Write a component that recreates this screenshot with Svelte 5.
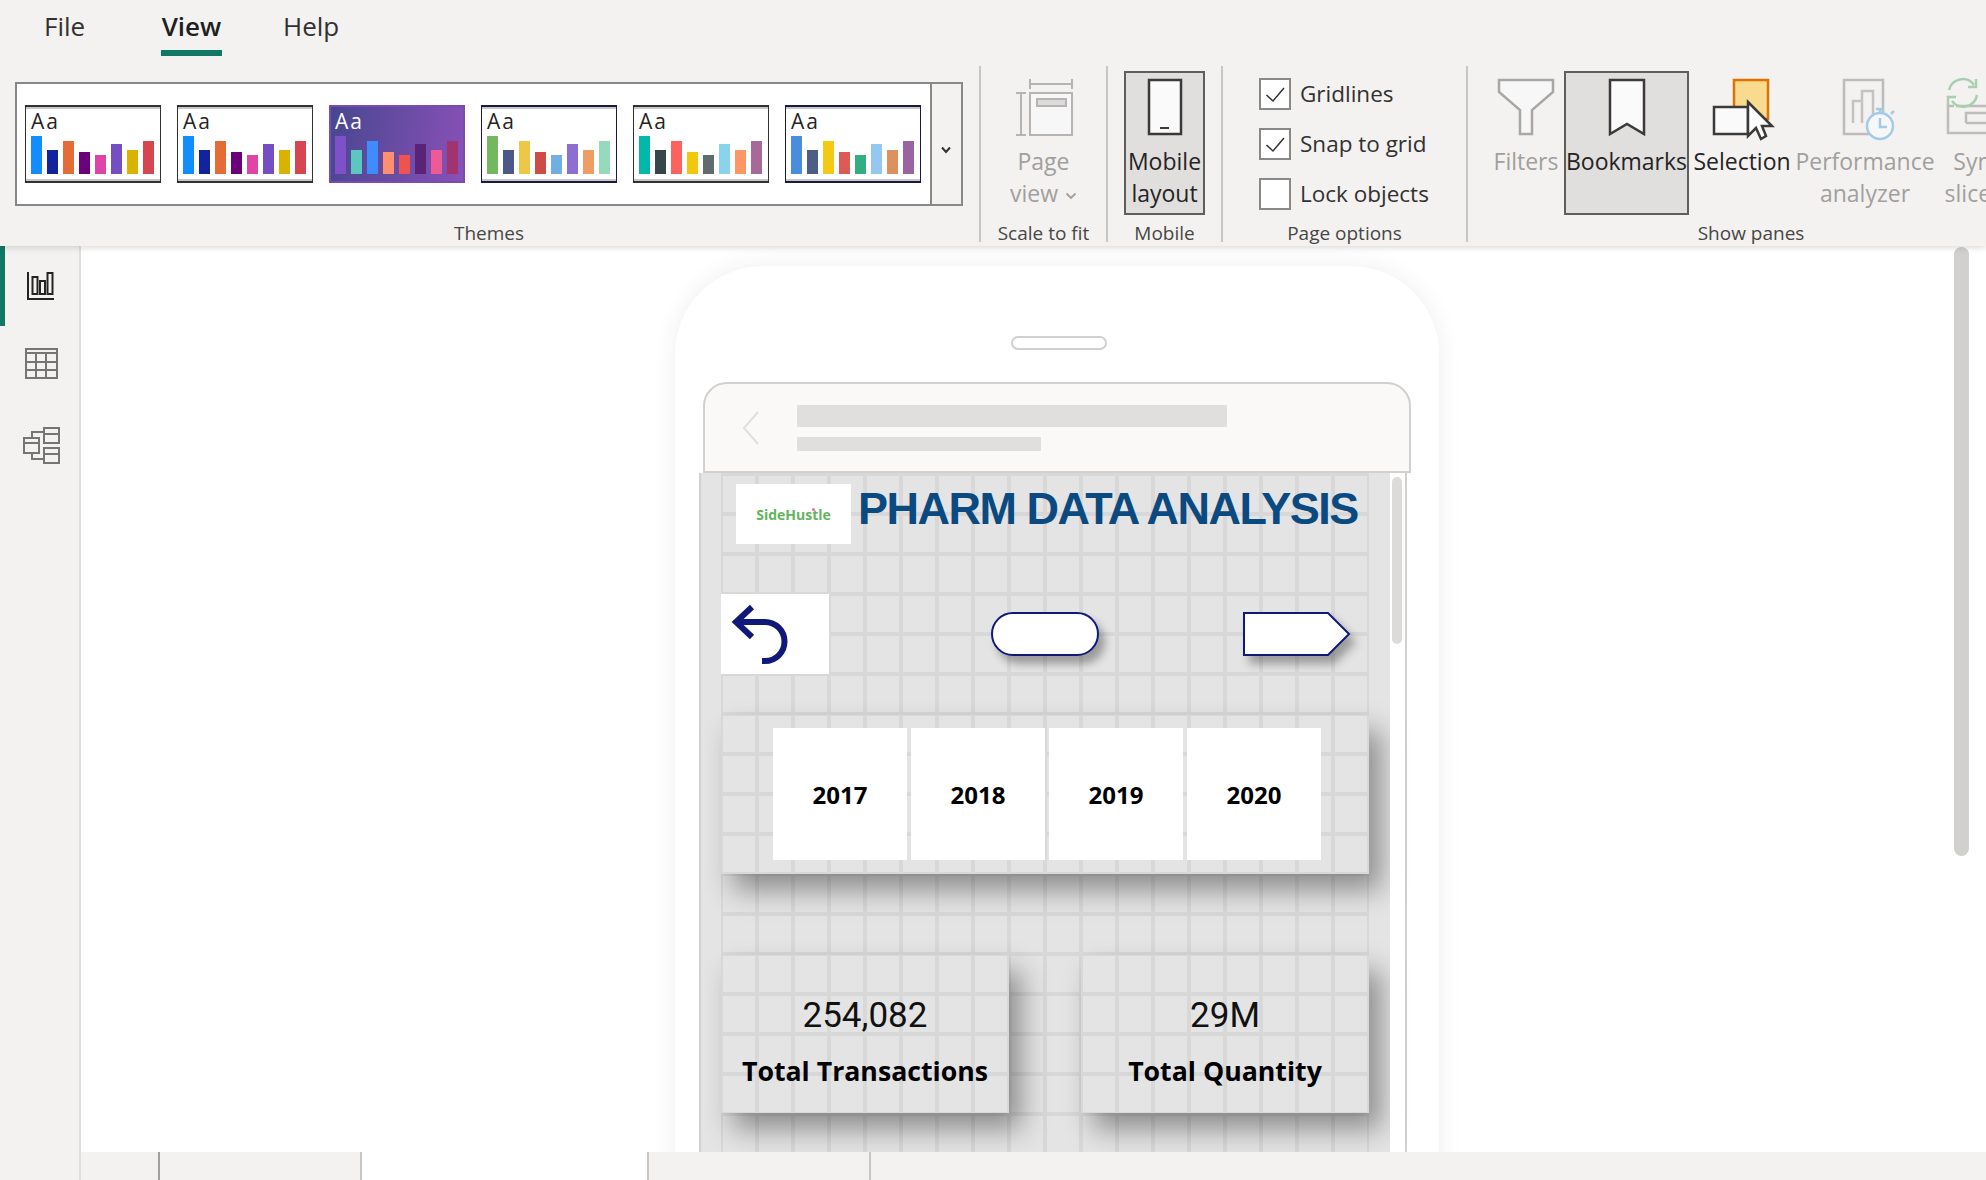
<script>
  const barHeights = [38, 24, 33, 22, 19, 30, 24, 33];
  const themes = [
    { colors: ['#118dff', '#12239e', '#e66c37', '#6b007b', '#e044a7', '#744ec2', '#d9b300', '#d64550'] },
    { colors: ['#118dff', '#12239e', '#e66c37', '#6b007b', '#e044a7', '#744ec2', '#d9b300', '#d64550'] },
    { colors: ['#8050c8', '#5cc6c0', '#3f8cff', '#ff8f6e', '#ee5350', '#5a2378', '#ee5a96', '#a13370'], selected: true },
    { colors: ['#73b761', '#4a588a', '#ecc846', '#cd4c46', '#71afe2', '#8d6fd1', '#ee9e64', '#95dabb'], navy: true },
    { colors: ['#01b8aa', '#374649', '#fd625e', '#f2c80f', '#5f6b6d', '#8ad4eb', '#fe9666', '#a66999'] },
    { colors: ['#4a8ddc', '#4c5d8a', '#f3c911', '#dc5b57', '#33ae81', '#95c8f0', '#dd915f', '#9a64a0'], navy: true },
  ];
  const years = ['2017', '2018', '2019', '2020'];
  const cards = [
    { value: '254,082', label: 'Total Transactions' },
    { value: '29M', label: 'Total Quantity' },
  ];
  const options = [
    { label: 'Gridlines', on: true },
    { label: 'Snap to grid', on: true },
    { label: 'Lock objects', on: false },
  ];
</script>

<div class="app">
  <header class="ribbon">
    <nav class="tabs">
      <span class="tab file">File</span>
      <span class="tab view">View</span>
      <span class="tab help">Help</span>
    </nav>

    <div class="tools">
      <section class="group themes">
        <div class="gallery">
          <div class="thumbs">
            {#each themes as theme}
              <div class="thumb" class:selected={theme.selected} class:navy={theme.navy}>
                <span class="aa">Aa</span>
                <div class="bars">
                  {#each theme.colors as color, i}
                    <i style="height:{barHeights[i]}px;background:{color}"></i>
                  {/each}
                </div>
              </div>
            {/each}
          </div>
          <div class="expand">
            <svg width="12" height="8" viewBox="0 0 12 8"><path d="M2 1.5 6 6l4-4.500" fill="none" stroke="#323130" stroke-width="2"/></svg>
          </div>
        </div>
        <div class="group-label">Themes</div>
      </section>

      <section class="group scale">
        <div class="cmd off">
          <svg width="60" height="60" viewBox="0 0 60 60" fill="none" stroke="#b5b4b2" stroke-width="2">
            <path d="M16 2v10M16 7h42M58 2v10M2 16h10M7 16v42M2 58h10"/>
            <rect x="16" y="16" width="42" height="42" fill="#f7f7f7"/>
            <rect x="23" y="22" width="29" height="7" fill="#dddcda"/>
          </svg>
          <span>Page</span>
          <span>view <svg class="caret" width="12" height="8" viewBox="0 0 12 8"><path d="M1.500 1.500 6 6l4.500-4.500" fill="none" stroke="#a19f9d" stroke-width="1.800"/></svg></span>
        </div>
        <div class="group-label">Scale to fit</div>
      </section>

      <section class="group mobile">
        <div class="cmd pressed">
          <svg width="60" height="60" viewBox="0 0 60 60" fill="#fafafa" stroke="#3b3a39" stroke-width="2.500">
            <rect x="14" y="3" width="32" height="54"/>
            <path d="M25 51h9" stroke-width="2"/>
          </svg>
          <span>Mobile</span>
          <span>layout</span>
        </div>
        <div class="group-label">Mobile</div>
      </section>

      <section class="group page-options">
        <div class="checks">
          {#each options as option}
            <label class="check">
              <span class="box">
                {#if option.on}
                  <svg width="28" height="28" viewBox="0 0 28 28"><path d="M5.500 15 12 21 23 8" fill="none" stroke="#323130" stroke-width="1.500"/></svg>
                {/if}
              </span>
              {option.label}
            </label>
          {/each}
        </div>
        <div class="group-label">Page options</div>
      </section>

      <section class="group panes">
        <div class="pane-row">
          <div class="cmd off filters">
            <svg width="60" height="60" viewBox="0 0 60 60" fill="#f7f7f7" stroke="#a8a7a5" stroke-width="2.500">
              <path d="M3 3h54v12L36 33v24H24V33L3 15z"/>
            </svg>
            <span>Filters</span>
          </div>
          <div class="cmd pressed bookmarks">
            <svg width="60" height="60" viewBox="0 0 60 60" fill="#fafafa" stroke="#3b3a39" stroke-width="2.500">
              <path d="M13 3h34v54L30 47 13 57z"/>
            </svg>
            <span>Bookmarks</span>
          </div>
          <div class="cmd selection">
            <svg width="64" height="64" viewBox="0 0 64 64">
              <rect x="22" y="3" width="34" height="39" fill="#f8db8f" stroke="#e07000" stroke-width="2.500"/>
              <rect x="2" y="30" width="34" height="27" fill="#fafafa" stroke="#3b3a39" stroke-width="2.500"/>
              <path d="M36 25 60 49H50L54 59 49 62 44 51 36 59z" fill="#fff" stroke="#3b3a39" stroke-width="2.500"/>
            </svg>
            <span>Selection</span>
          </div>
          <div class="cmd off performance">
            <svg width="64" height="64" viewBox="0 0 64 64" fill="none">
              <path d="M44 40V3H5v54h32" stroke="#bdbcba" stroke-width="2.500"/>
              <path d="M14 46V24h9v22M23 24V14h11v26" stroke="#c4c3c1" stroke-width="2.500"/>
              <circle cx="41" cy="49" r="13" fill="#f7f7f7" stroke="#a3cbe8" stroke-width="2.500"/>
              <path d="M41 41v9h7M37 32h8M41 32v4M52 37l3-3" stroke="#a3cbe8" stroke-width="2.500"/>
            </svg>
            <span>Performance</span>
            <span>analyzer</span>
          </div>
          <div class="cmd off sync">
            <svg width="64" height="64" viewBox="0 0 64 64" fill="none">
              <path d="M10 29h32v27H2V29h6M20 46V36h22M20 46h22" stroke="#bdbcba" stroke-width="2.500"/>
              <path d="M42 4h24M42 12h24" stroke="#bdbcba" stroke-width="4"/>
              <path d="M3 13a14 14 0 0 1 25-5M31 18a14 14 0 0 1-25 6" stroke="#a8d0b0" stroke-width="2.500"/>
              <path d="M30 2v8h-8M2 28v-8h8" stroke="#a8d0b0" stroke-width="2.500"/>
            </svg>
            <span>Sync</span>
            <span>slicers</span>
          </div>
        </div>
        <div class="group-label">Show panes</div>
      </section>
    </div>
  </header>

  <div class="body">
    <aside class="rail">
      <div class="rail-item active">
        <svg width="40" height="40" viewBox="0 0 40 40" fill="none" stroke="#252423" stroke-width="2">
          <path d="M8 6v27h26"/>
          <rect x="12.500" y="11" width="5" height="17"/>
          <rect x="20" y="15" width="5" height="13"/>
          <rect x="27.500" y="7" width="5" height="21"/>
        </svg>
      </div>
      <div class="rail-item">
        <svg width="40" height="40" viewBox="0 0 40 40" fill="none" stroke="#767574" stroke-width="2">
          <rect x="6" y="3" width="31" height="29"/>
          <path d="M6 7h31M6 16h31M6 24h31M16 7v25M26 7v25"/>
        </svg>
      </div>
      <div class="rail-item">
        <svg width="40" height="40" viewBox="0 0 40 40" fill="none" stroke="#767574" stroke-width="2">
          <rect x="4" y="12" width="15" height="15"/>
          <path d="M4 17h15"/>
          <rect x="24" y="2" width="15" height="15"/>
          <path d="M24 8h15"/>
          <rect x="24" y="22" width="15" height="15"/>
          <path d="M24 28h15M12 12V6h12M12 27v6h12"/>
        </svg>
      </div>
    </aside>

    <div class="work">
      <main class="stage">
        <div class="phone">
          <div class="speaker"></div>
          <div class="phone-header">
            <svg class="back" width="18" height="34" viewBox="0 0 18 34"><path d="M16 1 2 17l14 16" fill="none" stroke="#e1dfdd" stroke-width="2"/></svg>
            <div class="ghost">
              <div class="ghost-title"></div>
              <div class="ghost-sub"></div>
            </div>
          </div>
          <div class="screen">
            <div class="canvas">
              <div class="sheet">
                <div class="title-row">
                  <div class="logo">
                    <span class="logo-text">SideHustle</span>
                  </div>
                  <h1>PHARM DATA ANALYSIS</h1>
                </div>

                <div class="nav-row">
                  <div class="back-btn">
                    <svg width="108" height="80" viewBox="0 0 108 80" fill="none" stroke="#10187a" stroke-width="6">
                      <path d="M31 13 15 28l16 15M15 28h29a19.500 19.500 0 0 1 0 39h-3"/>
                    </svg>
                  </div>
                  <div class="pill"></div>
                  <svg class="tag" width="108" height="46" viewBox="0 0 108 46">
                    <path d="M1 2h84l21 21-21 21H1z" fill="#fff" stroke="#10187a" stroke-width="2"/>
                  </svg>
                </div>

                <div class="slicer">
                  {#each years as year}
                    <div class="year">{year}</div>
                  {/each}
                </div>

                <div class="cards">
                  {#each cards as card}
                    <div class="card">
                      <div class="value">{card.value}</div>
                      <div class="label">{card.label}</div>
                    </div>
                  {/each}
                </div>
              </div>
            </div>
            <div class="inner-scroll"><div class="inner-thumb"></div></div>
          </div>
        </div>
        <div class="scrollbar"></div>
      </main>

      <footer class="pages">
        <div class="page-cell first"></div>
        <div class="page-cell second"></div>
        <div class="page-cell current"></div>
        <div class="page-cell fourth"></div>
      </footer>
    </div>
  </div>
</div>

<style>
  :global(body) { margin: 0; background: #fff; }

  .app {
    width: 1986px; height: 1180px; overflow: hidden;
    display: flex; flex-direction: column;
    font-family: "Open Sans", "Noto Sans", sans-serif;
    color: #252423;
  }

  /* ribbon */
  .ribbon {
    height: 246px; flex-shrink: 0; background: #f3f2f1;
    position: relative; z-index: 2;
    box-shadow: 0 2px 6px rgba(0, 0, 0, 0.14);
  }
  .tabs { height: 66px; display: flex; position: relative; }
  .tab { font-size: 26px; line-height: 52px; color: #323130; }
  .file { margin-left: 44px; width: 117px; }
  .view {
    width: 61px; height: 50px;
    border-bottom: 6px solid #117865; font-weight: 600; color: #201f1e;
    text-align: center;
  }
  .help { margin-left: 61px; }

  .tools { height: 180px; display: flex; }
  .group {
    display: flex; flex-direction: column; justify-content: space-between; flex-shrink: 0;
    border-right: 2px solid #c8c6c4; height: 176px;
  }
  .group-label {
    font-size: 19px; line-height: 24px; text-align: center; color: #484644;
    height: 22px; margin-bottom: -1px;
  }

  .themes { width: 964px; margin-left: 15px; padding-top: 16px; height: 160px; }
  .themes .group-label { width: 948px; }
  .gallery {
    width: 948px; height: 124px; box-sizing: border-box; display: flex;
    border: 2px solid #8a8886; background: #fff;
  }
  .thumbs { width: 913px; padding: 21px 0 0 8px; display: flex; gap: 16px; box-sizing: border-box; }
  .expand {
    flex: 1; display: flex; align-items: center; justify-content: center;
    background: #f3f2f1; border-left: 2px solid #8a8886; padding: 12px 2px 0 0;
  }
  .thumb {
    width: 136px; height: 78px; box-sizing: border-box; flex-shrink: 0;
    border: 1px solid #323130; border-width: 2px 1px;
    background: #fff; position: relative;
    box-shadow: inset 0 2px 0 #c8c8c8, inset 0 -2px 0 #c8c8c8;
  }
  .thumb.navy { border-color: #1a1a40; }
  .thumb.selected {
    background: linear-gradient(100deg, #47478f, #8a50b8);
    border-color: #2c2a5c; outline: 2px solid #7a4bb0; outline-offset: -2px;
    box-shadow: none;
  }
  .selected .aa { color: #fff; }
  .aa {
    position: absolute; left: 5px; top: 1px;
    font-size: 21px; line-height: 26px; letter-spacing: 2px; color: #252423;
  }
  .bars {
    position: absolute; left: 5px; bottom: 7px;
    display: flex; align-items: flex-end; gap: 5px;
  }
  .bars i { width: 11px; display: block; }

  .cmd {
    display: flex; flex-direction: column; align-items: center; flex-shrink: 0;
    font-size: 23px; line-height: 32px; color: #252423; box-sizing: border-box;
  }
  .cmd svg { display: block; flex-shrink: 0; margin-bottom: 8px; }
  .cmd span { white-space: nowrap; }
  .cmd.off { color: #a19f9d; }
  .cmd .caret { display: inline-block; margin: 0 0 2px 1px; }
  .cmd.pressed {
    background: #e1dfdd; border: 2px solid #605e5c; height: 144px;
    padding-top: 4px; margin-top: 5px;
  }

  .scale { width: 125px; height: 176px; }
  .scale .cmd { margin-top: 11px; }
  .mobile { width: 113px; align-items: center; }
  .mobile .cmd { width: 81px; }
  .page-options { width: 243px; }
  .checks {
    padding: 12px 0 0 36px; display: flex; flex-direction: column; gap: 18px;
  }
  .check { display: flex; align-items: center; gap: 9px; font-size: 22.500px; line-height: 32px; color: #323130; }
  .box {
    width: 32px; height: 32px; box-sizing: border-box; background: #fff;
    border: 2px solid #8a8886; display: block;
  }
  .box svg { display: block; margin: 0; }

  .panes { border-right: 0; width: 520px; }
  .pane-row { display: flex; padding-left: 20px; }
  .pane-row .cmd:not(.pressed) { margin-top: 11px; }
  .filters { width: 76px; }
  .bookmarks { width: 125px; }
  .selection { width: 106px; }
  .performance { width: 140px; }
  .sync { width: 86px; }
  .panes .group-label { width: 566px; }
  .selection svg, .performance svg, .sync svg { margin-bottom: 4px; }
  .selection svg { margin-left: 4px; }
  .performance svg { margin-left: 12px; }

  /* left rail */
  .body { flex: 1; display: flex; min-height: 0; }
  .rail {
    width: 81px; flex-shrink: 0; box-sizing: border-box;
    background: #f3f2f1; border-right: 2px solid #e1dfdd;
  }
  .rail-item { height: 80px; padding-left: 20px; display: flex; align-items: center; box-sizing: border-box; }
  .rail-item.active { box-shadow: inset 5px 0 0 #117865; }

  .work { flex: 1; min-width: 0; display: flex; flex-direction: column; }
  .stage { flex: 1; min-height: 0; overflow: hidden; position: relative; background: #fff; }
  .scrollbar {
    position: absolute; right: 17px; top: 1px; width: 15px; height: 609px;
    background: #d2d0ce; border-radius: 8px;
  }

  /* phone frame */
  .phone {
    width: 764px; height: 1100px; margin: 20px 0 0 594px; box-sizing: border-box;
    background: #fff; border-radius: 88px 88px 0 0; padding-top: 70px;
    box-shadow: 0 0 24px rgba(0, 0, 0, 0.07);
  }
  .speaker {
    width: 96px; height: 14px; margin-left: 336px; box-sizing: border-box;
    border: 2px solid #d2d0ce; border-radius: 7px;
  }
  .phone-header {
    width: 708px; height: 91px; margin: 32px 0 0 28px; box-sizing: border-box;
    border: 2px solid #d2d0ce; border-radius: 24px 24px 0 0; background: #faf9f8;
    display: flex; align-items: flex-start;
  }
  .back { margin: 27px 0 0 37px; }
  .ghost { margin-left: 37px; padding-top: 21px; }
  .ghost-title { width: 430px; height: 22px; background: #e1dfdd; }
  .ghost-sub { width: 244px; height: 14px; margin-top: 10px; background: #e1dfdd; }

  .screen {
    width: 708px; height: 800px; margin-left: 24px; box-sizing: border-box;
    display: flex; border-left: 2px solid #d2d0ce; border-right: 2px solid #d2d0ce;
  }
  .canvas {
    width: 689px; padding: 0 21px 0 20px; box-sizing: border-box;
    background: #e4e4e4; display: flex;
  }
  .sheet {
    flex: 1; box-sizing: border-box;
    background-color: #e4e4e4;
    background-image:
      linear-gradient(to right, #d8d8d8 4px, transparent 4px),
      linear-gradient(to bottom, #d8d8d8 4px, transparent 4px);
    background-size: 36px 40px;
    background-position: -2px -1px;
  }

  .title-row { display: flex; padding: 11px 0 0 15px; height: 60px; }
  .logo {
    width: 115px; height: 60px; background: #fff; position: relative;
    display: flex; align-items: center; justify-content: center;
  }
  .logo::after {
    content: ""; position: absolute; left: 76px; top: 24px;
    width: 3px; height: 3px; border-radius: 50%; background: #e86aa6;
  }
  .logo-text {
    font-family: "Open Sans", sans-serif; font-weight: 700; font-size: 14px;
    color: #62b45f;
  }
  h1 {
    margin: 0 0 0 7px; font-family: "Liberation Sans", Arial, sans-serif;
    font-size: 45px; line-height: 50px; font-weight: 700; color: #0b4a80;
    letter-spacing: -1.500px; white-space: nowrap;
  }

  .nav-row { display: flex; align-items: center; height: 80px; margin-top: 50px; }
  .back-btn { width: 108px; height: 80px; background: #fff; flex-shrink: 0; }
  .back-btn svg { display: block; }
  .pill {
    width: 108px; height: 44px; margin-left: 162px; box-sizing: border-box;
    background: #fff; border: 2px solid #10187a; border-radius: 22px;
    box-shadow: 6px 8px 8px rgba(0, 0, 0, 0.32);
  }
  .tag {
    margin-left: 144px; flex-shrink: 0;
    filter: drop-shadow(6px 8px 5px rgba(0, 0, 0, 0.32));
  }

  .slicer {
    height: 159px; margin-top: 41px; padding: 13px 0 0 52px; box-sizing: border-box;
    display: flex; gap: 4px;
    box-shadow: 12px 16px 26px rgba(0, 0, 0, 0.38);
  }
  .year {
    width: 134px; height: 132px; background: #fff;
    display: flex; align-items: center; justify-content: center;
    font-size: 24px; font-weight: 700; color: #000;
  }

  .cards { display: flex; gap: 72px; margin-top: 81px; }
  .card {
    width: 288px; height: 158px; text-align: center;
    box-shadow: 12px 16px 26px rgba(0, 0, 0, 0.38);
  }
  .value {
    font-family: Roboto, sans-serif; font-size: 35px; line-height: 44px;
    margin-top: 39px; color: #111;
  }
  .label { font-size: 26.700px; line-height: 36px; font-weight: 700; color: #000; margin-top: 15px; }

  .inner-scroll { flex: 1; padding: 4px 3px 0 2px; background: #fff; }
  .inner-thumb { height: 167px; background: #dddbd9; border-radius: 5px; }

  /* page tabs */
  .pages { height: 28px; flex-shrink: 0; display: flex; background: #f3f2f1; }
  .page-cell { box-sizing: border-box; height: 28px; }
  .first { width: 79px; border-right: 2px solid #a19f9d; }
  .second { width: 202px; border-right: 2px solid #c8c6c4; }
  .current { width: 285px; background: #fff; }
  .fourth { width: 224px; border-left: 2px solid #c8c6c4; border-right: 2px solid #c8c6c4; }
</style>
